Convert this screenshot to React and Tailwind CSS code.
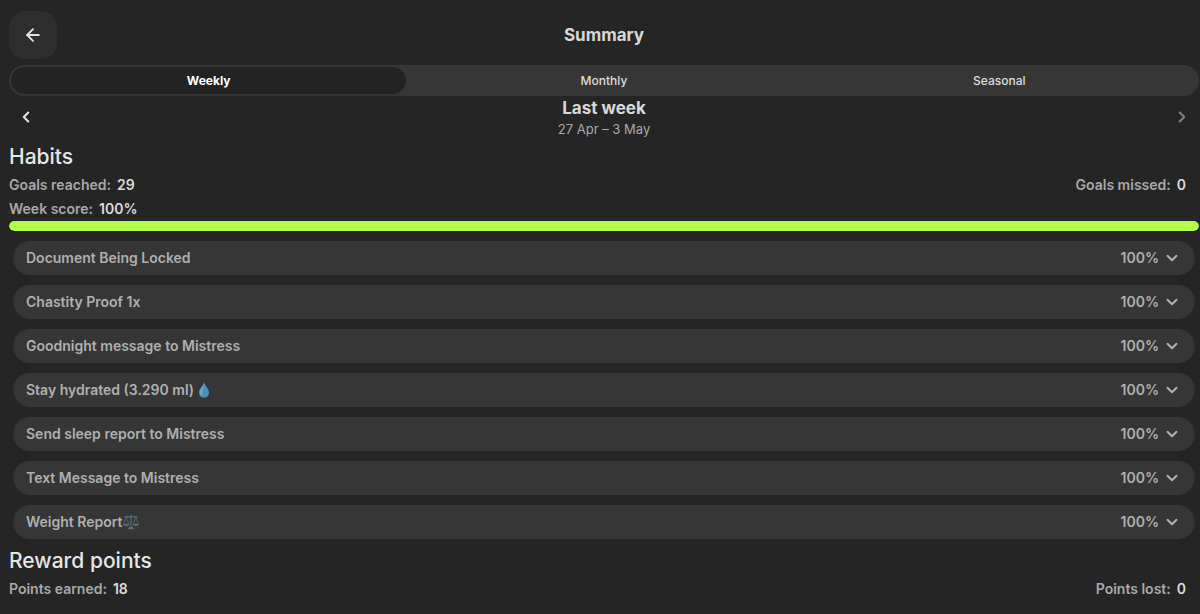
import React, { useState } from "react";
import { ArrowLeft, ChevronDown, ChevronLeft, ChevronRight } from "lucide-react";

const TABS = ["Weekly", "Monthly", "Seasonal"];

const HABITS = [
  { id: 1, name: "Document Being Locked", score: 100 },
  { id: 2, name: "Chastity Proof 1x", score: 100 },
  { id: 3, name: "Goodnight message to Mistress", score: 100 },
  { id: 4, name: "Stay hydrated (3.290 ml)", icon: "drop", score: 100 },
  { id: 5, name: "Send sleep report to Mistress", score: 100 },
  { id: 6, name: "Text Message to Mistress", score: 100 },
  { id: 7, name: "Weight Report", icon: "scales", score: 100 },
];

/* ===============================
   ICONS
=============================== */
const DropIcon = () => (
  <svg viewBox="0 0 16 16" className="ml-0.5 size-4" role="img" aria-label="droplet">
    <path
      d="M8 .3C7.400 3.200 2.900 6.900 2.900 10.600a5.100 5.100 0 0 0 10.200 0C13.100 6.900 8.600 3.200 8 .3Z"
      fill="#4d8fb8"
    />
    <path
      d="M7.600 2.800C6.500 5.500 4 8 4.100 10.700c.1 1.500.9 2.500 2 2.700C5.500 10.500 7 6.800 7.600 2.800Z"
      fill="#79b0d0"
    />
  </svg>
);

const ScalesIcon = () => (
  <svg
    viewBox="0 0 16 16"
    className="size-4"
    role="img"
    aria-label="balance scale"
    fill="none"
    stroke="#56707f"
    strokeWidth="1.100"
    strokeLinecap="round"
    strokeLinejoin="round"
  >
    <path d="M8 1v13M5 14.800h6M6.300 13.600h3.400M1.800 2.900h4.700L8 2.200l1.500.7h4.700" />
    <path d="M3.300 3 .9 10M3.300 3l2.400 7M12.700 3l-2.400 7M12.700 3l2.400 7" strokeWidth="0.7" />
    <path d="M.7 10.200h5.200c-.3 1.800-4.900 1.800-5.200 0ZM10.100 10.200h5.200c-.3 1.800-4.900 1.800-5.200 0Z" fill="#56707f" />
  </svg>
);

/* ===============================
   STAT
=============================== */
const Stat = ({ label, value }) => (
  <p className="flex gap-1.5 text-sm leading-6 font-semibold text-[#a9a9a9]">
    <span>{label}:</span>
    <span className="text-[#dcdcdc]">{value}</span>
  </p>
);

const SectionTitle = ({ children }) => (
  <h2 className="text-[21px] leading-8 font-medium text-[#e6e6e6]">{children}</h2>
);

/* ===============================
   HABIT ROW
=============================== */
const HabitRow = ({ habit }) => {
  const [open, setOpen] = useState(false);

  return (
    <li>
      <button
        type="button"
        aria-expanded={open}
        onClick={() => setOpen(!open)}
        className="flex h-[34px] w-full items-center justify-between rounded-full bg-[#363636] pr-3.5 pl-[13px] text-sm font-semibold text-[#b0b0b0]"
      >
        <span className="flex items-center">
          {habit.name}
          {habit.icon === "drop" && <DropIcon />}
          {habit.icon === "scales" && <ScalesIcon />}
        </span>
        <span className="flex items-center gap-1">
          {habit.score}%
          <ChevronDown
            className={open ? "size-[18px] rotate-180" : "size-[18px]"}
            strokeWidth={2.8}
          />
        </span>
      </button>
    </li>
  );
};

export default function App() {
  const [tab, setTab] = useState("Weekly");

  return (
    <main className="min-h-screen bg-[#252525] pt-[11px] pr-px pb-3 pl-[9px] font-['Inter',sans-serif]">
      {/* ================= HEADER ================= */}
      <header className="grid grid-cols-[48px_1fr_48px] items-center">
        <button
          type="button"
          aria-label="Back"
          className="flex size-12 items-center justify-center rounded-2xl bg-[#2e2e2e] text-[#e4e4e4]"
        >
          <ArrowLeft className="size-5" strokeWidth={2.2} />
        </button>
        <h1 className="text-center text-[17px] leading-6 font-bold text-[#d8d8d8]">Summary</h1>
      </header>

      {/* ================= TABS ================= */}
      <div role="tablist" className="mt-1.5 grid h-[31px] grid-cols-3 rounded-full bg-[#363636] p-0.5">
        {TABS.map((name) => (
          <button
            key={name}
            type="button"
            role="tab"
            aria-selected={tab === name}
            onClick={() => setTab(name)}
            className={
              tab === name
                ? "rounded-full bg-[#232323] text-xs font-bold text-white"
                : "rounded-full text-xs font-medium text-[#dedede]"
            }
          >
            {name}
          </button>
        ))}
      </div>

      {/* ================= PERIOD ================= */}
      <div className="flex items-center justify-between px-2">
        <button type="button" aria-label="Previous week" className="text-[#e4e4e4]">
          <ChevronLeft className="size-[18px]" strokeWidth={2.8} />
        </button>
        <div className="text-center">
          <p className="text-[17px] leading-6 font-bold text-[#d8d8d8]">Last week</p>
          <p className="text-[13px] leading-[18px] text-[#a9a9a9]">27 Apr – 3 May</p>
        </div>
        <button type="button" aria-label="Next week" className="text-[#808080]">
          <ChevronRight className="size-[18px]" strokeWidth={2.8} />
        </button>
      </div>

      {/* ================= HABITS ================= */}
      <section className="mt-[3px]">
        <SectionTitle>Habits</SectionTitle>
        <div className="flex justify-between pr-[13px]">
          <Stat label="Goals reached" value="29" />
          <Stat label="Goals missed" value="0" />
        </div>
        <Stat label="Week score" value="100%" />
        <div
          role="progressbar"
          aria-label="Week score"
          aria-valuenow={100}
          className="h-2.5 overflow-hidden rounded-full bg-[#363636]"
        >
          <div className="h-full rounded-full bg-[#b1fc4e]" style={{ width: "100%" }} />
        </div>
        <ul className="mx-1 mt-2.5 space-y-2.5">
          {HABITS.map((habit) => (
            <HabitRow key={habit.id} habit={habit} />
          ))}
        </ul>
      </section>

      {/* ================= REWARD POINTS ================= */}
      <section className="mt-1.5">
        <SectionTitle>Reward points</SectionTitle>
        <div className="flex justify-between pr-[13px]">
          <Stat label="Points earned" value="18" />
          <Stat label="Points lost" value="0" />
        </div>
      </section>
    </main>
  );
}
